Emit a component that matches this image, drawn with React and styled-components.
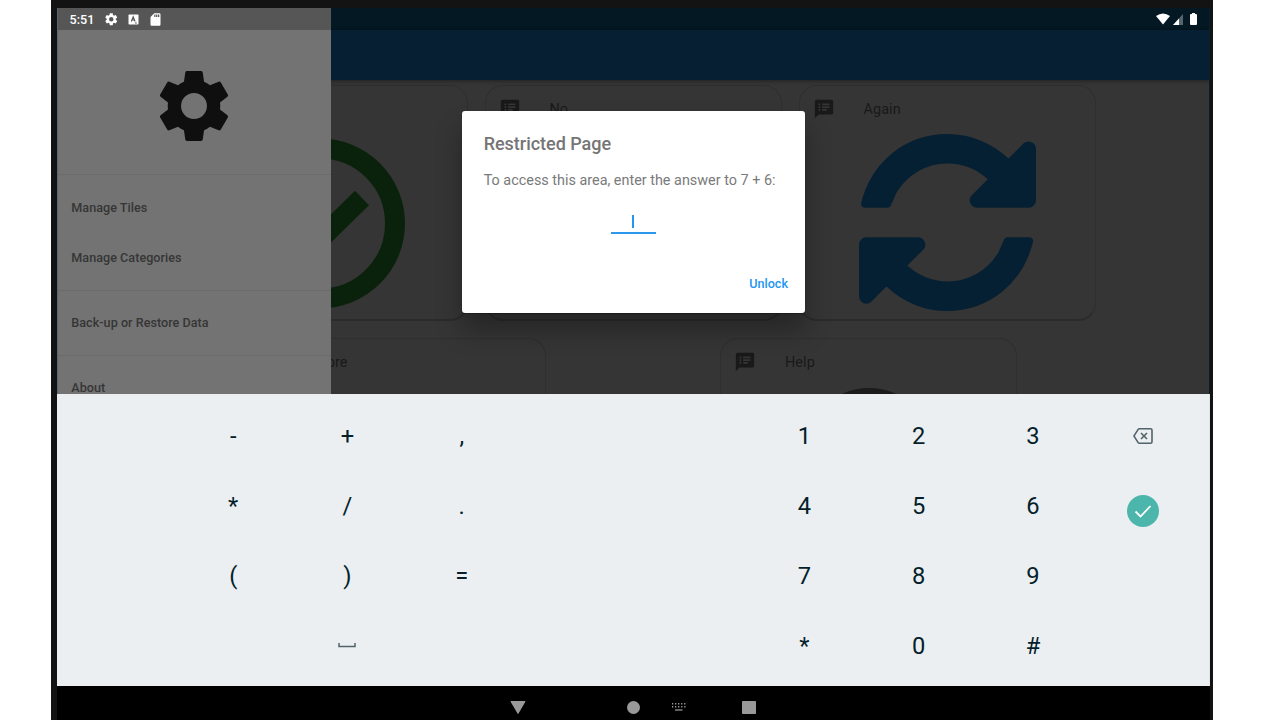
import React from "react";
import styled, { createGlobalStyle } from "styled-components";
import { MdSpeakerNotes, MdSdCard } from "react-icons/md";

const GlobalStyle = createGlobalStyle`
  * { box-sizing: border-box; }
  body { margin: 0; background: #fff; font-family: Roboto, "Liberation Sans", sans-serif; overflow: hidden; }
`;

const Device = styled.div`
  width: 1162px;
  height: 720px;
  margin-left: 51px;
  padding: 8px 3px 0 6px;
  background: #131313;
`;

const Screen = styled.div`
  display: flex;
  flex-direction: column;
  height: 712px;
  overflow: hidden;
`;

const AppArea = styled.div`
  position: relative;
  height: 386px;
  flex: none;
  overflow: hidden;
  background: #353535;
  border-right: 1px solid #04202d;
`;

const StatusBar = styled.div`
  height: 22px;
  background: #031822;
`;

const Toolbar = styled.div`
  position: relative;
  height: 50px;
  background: #071f33;
  box-shadow: 0 1px 4px rgba(0, 0, 0, 0.4);
`;

const TileRow = styled.div`
  display: flex;
  justify-content: center;
  gap: ${(p) => p.$gap}px;
  margin-top: ${(p) => p.$top}px;
`;

const Tile = styled.div`
  flex: none;
  width: 297px;
  height: 236px;
  border: 1px solid #2f2f2f;
  border-bottom: 2px solid #2b2b2b;
  border-radius: 18px;
`;

const TileHeader = styled.div`
  display: flex;
  align-items: center;
  gap: 29px;
  height: 22px;
  margin: 12px 0 0 13px;
  color: #191919;
  font-size: 14.4px;
  letter-spacing: 0.1px;
`;

const TileArt = styled.div`
  display: flex;
  justify-content: center;
  margin-top: ${(p) => p.$top}px;
`;

const Drawer = styled.div`
  position: absolute;
  top: 0;
  left: 0;
  width: 274px;
  height: 100%;
  background: #737373;
  border-left: 1px solid #526771;
`;

const DrawerStatus = styled.div`
  height: 22px;
  background: #565656;
`;

const DrawerHeader = styled.div`
  display: flex;
  align-items: center;
  justify-content: center;
  height: 145px;
  padding: 8px 2px 0 0;
  border-bottom: 1px solid #6b6b6b;
`;

const DrawerGroup = styled.div`
  padding: ${(p) => p.$top}px 0 ${(p) => p.$bottom}px;
  border-bottom: 1px solid #6b6b6b;
`;

const DrawerItem = styled.div`
  height: 50px;
  padding-left: 13.3px;
  line-height: 51px;
  font-size: 12.6px;
  font-weight: 500;
  letter-spacing: 0.03px;
  color: #363636;
`;

const StatusIcons = styled.div`
  position: absolute;
  top: 0;
  left: 0;
  display: flex;
  align-items: center;
  width: 100%;
  height: 22px;
  padding: 0 12px 0 12.5px;
  color: #fff;
`;

const Clock = styled.span`
  width: 34.5px;
  font-size: 12.6px;
  font-weight: 500;
  letter-spacing: 0.05px;
`;

const StatusGlyph = styled.span`
  display: flex;
  width: ${(p) => p.$width}px;
  margin-left: ${(p) => p.$push || "0"};
`;

const Dialog = styled.div`
  position: absolute;
  top: 103px;
  left: 405px;
  display: flex;
  flex-direction: column;
  width: 343px;
  height: 202px;
  padding: 21px 17px 0 21.7px;
  border-radius: 3px;
  background: #fff;
  box-shadow: 0 17px 27px rgba(0, 0, 0, 0.3), 0 1px 1px rgba(0, 0, 0, 0.3);
`;

const DialogTitle = styled.div`
  height: 22px;
  line-height: 23px;
  font-size: 18px;
  font-weight: 500;
  letter-spacing: -0.03px;
  color: #757575;
`;

const DialogText = styled.div`
  height: 20px;
  margin-top: 17px;
  line-height: 20px;
  font-size: 14.4px;
  white-space: nowrap;
  color: #7a7a7a;
`;

const AnswerField = styled.div`
  display: flex;
  justify-content: center;
  width: 45px;
  height: 21px;
  margin: 22px 0 0 127.3px;
  padding-right: 1px;
  border-bottom: 2px solid #2b98ee;
`;

const Caret = styled.div`
  width: 2px;
  height: 13px;
  margin-top: 2px;
  background: #2196f3;
`;

const UnlockButton = styled.button`
  align-self: flex-end;
  height: 20px;
  margin-top: 40px;
  padding: 0;
  border: 0;
  background: none;
  font: 500 12.6px/20px Roboto, sans-serif;
  letter-spacing: 0;
  color: #2196f3;
`;

const Keyboard = styled.div`
  display: grid;
  flex: none;
  grid-template-columns: repeat(8, 114.25px) 105px;
  grid-auto-rows: 70px;
  height: 292px;
  padding: 7px 0 0 119.1px;
  background: #ebeff2;
  border-right: 1px solid #dfe6ea;
`;

const Key = styled.div`
  display: flex;
  align-items: center;
  justify-content: center;
  padding-top: ${(p) => p.$drop || 0}px;
  font-size: 23.7px;
  color: #061f2b;
`;

const EnterKey = styled.div`
  display: flex;
  align-items: center;
  justify-content: center;
  width: 32px;
  height: 32px;
  margin-left: 1px;
  border-radius: 50%;
  background: #4db6ac;
`;

const NavBar = styled.div`
  display: flex;
  align-items: center;
  flex: 1;
  padding: 8px 0 0 453px;
  background: #000;
`;

const NavItem = styled.span`
  display: flex;
  width: ${(p) => p.$width}px;
`;

const Gear = ({ size, color }) => (
  <svg width={size} height={size} viewBox="0 0 24 24" fill={color}>
    <path d="M19.43 12.98c.04-.32.07-.64.07-.98s-.03-.66-.07-.98l2.11-1.65c.19-.15.24-.42.12-.64l-2-3.46c-.12-.22-.39-.3-.61-.22l-2.49 1c-.52-.4-1.08-.73-1.69-.98l-.38-2.65C14.46 2.18 14.25 2 14 2h-4c-.25 0-.46.18-.49.42l-.38 2.65c-.61.25-1.17.59-1.69.98l-2.49-1c-.23-.09-.49 0-.61.22l-2 3.46c-.13.22-.07.49.12.64l2.11 1.65c-.04.32-.07.65-.07.98s.03.66.07.98l-2.11 1.65c-.19.15-.24.42-.12.64l2 3.46c.12.22.39.3.61.22l2.49-1c.52.4 1.08.73 1.69.98l.38 2.65c.03.24.24.42.49.42h4c.25 0 .46-.18.49-.42l.38-2.65c.61-.25 1.17-.59 1.69-.98l2.49 1c.23.09.49 0 .61-.22l2-3.46c.12-.22.07-.49-.12-.64l-2.11-1.65zM12 15.7a3.7 3.7 0 1 1 0-7.4 3.7 3.7 0 0 1 0 7.4z" />
  </svg>
);

const CheckArt = () => (
  <svg width="171" height="171" viewBox="0 0 171 171" fill="none" stroke="#0a220b" strokeWidth="20">
    <circle cx="86" cy="85.5" r="75" />
    <path d="M41 86L71 116L128 60" />
  </svg>
);

const RefreshArt = () => (
  <svg width="177" height="177" viewBox="0 0 1536 1536" fill="#062033">
    <path d="M1511 928q0 5-1 7-64 268-268 434.500t-478 166.500q-146 0-282.500-55t-243.500-157l-129 129q-19 19-45 19t-45-19-19-45v-448q0-26 19-45t45-19h448q26 0 45 19t19 45-19 45l-137 137q71 66 161 102t187 36q134 0 250-65t186-179q11-17 53-117 8-23 30-23h192q13 0 22.500 9.500t9.500 22.500zm25-800v448q0 26-19 45t-45 19h-448q-26 0-45-19t-19-45 19-45l138-138q-148-137-349-137-134 0-250 65t-186 179q-11 17-53 117-8 23-30 23h-199q-13 0-22.500-9.500t-9.500-22.500v-7q65-268 270-434.500t480-166.500q146 0 284 55.500t245 156.500l130-129q19-19 45-19t45 19 19 45z" />
  </svg>
);

const HelpArt = () => (
  <svg width="130" height="130" viewBox="0 0 130 130">
    <circle cx="65" cy="65" r="65" fill="#1b1b1b" />
  </svg>
);

const TileCard = ({ label, top, children }) => (
  <Tile>
    <TileHeader>
      <MdSpeakerNotes size={22} />
      {label}
    </TileHeader>
    <TileArt $top={top}>{children}</TileArt>
  </Tile>
);

const SpaceIcon = () => (
  <svg width="18" height="6" viewBox="0 0 18 6" fill="none" stroke="#53636c" strokeWidth="1.5">
    <path d="M1 0V3.500H17V0" />
  </svg>
);

const BackspaceIcon = () => (
  <svg width="20" height="16" viewBox="0 0 20 16" fill="none" stroke="#53636c" strokeWidth="1.600">
    <path d="M6.500 0.800H17.500Q19 0.800 19 2.300V13.700Q19 15.200 17.500 15.200H6.500Q5.600 15.200 5 14.400L0.900 8L5 1.600Q5.600 0.800 6.500 0.800Z" />
    <path d="M8 5L14 11M14 5L8 11" />
  </svg>
);

const keys = [
  "-", "+", ",", "", "", "1", "2", "3", "back",
  "*", "/", ".", "", "", "4", "5", "6", "enter",
  "(", ")", "=", "", "", "7", "8", "9", "",
  "", "space", "", "", "", "*", "0", "#", "",
];

const keyFace = {
  back: <BackspaceIcon />,
  space: <SpaceIcon />,
  enter: (
    <EnterKey>
      <svg width="18" height="14" viewBox="0 0 18 14" fill="none" stroke="#fff" strokeWidth="1.800">
        <path d="M1.500 7.500L6.500 12.500L16.500 2" />
      </svg>
    </EnterKey>
  ),
};

const keyDrop = { enter: 10 };

export default function App() {
  return (
    <Device>
      <GlobalStyle />
      <Screen>
        <AppArea>
          <StatusBar />
          <Toolbar />
          <TileRow $gap={17} $top={5}>
            <TileCard label="Yes" top={18}><CheckArt /></TileCard>
            <TileCard label="No" top={14} />
            <TileCard label="Again" top={14}><RefreshArt /></TileCard>
          </TileRow>
          <TileRow $gap={174} $top={17}>
            <TileCard label="More" top={14} />
            <TileCard label="Help" top={15}><HelpArt /></TileCard>
          </TileRow>
          <Drawer>
            <DrawerStatus />
            <DrawerHeader><Gear size={84} color="#0f0f0f" /></DrawerHeader>
            <DrawerGroup $top={7} $bottom={8}>
              <DrawerItem>Manage Tiles</DrawerItem>
              <DrawerItem>Manage Categories</DrawerItem>
            </DrawerGroup>
            <DrawerGroup $top={6} $bottom={8}>
              <DrawerItem>Back-up or Restore Data</DrawerItem>
            </DrawerGroup>
            <DrawerGroup $top={6} $bottom={8}>
              <DrawerItem>About</DrawerItem>
            </DrawerGroup>
          </Drawer>
          <StatusIcons>
            <Clock>5:51</Clock>
            <StatusGlyph $width={23.500}><Gear size={14.500} color="#fff" /></StatusGlyph>
            <StatusGlyph $width={20}>
              <svg width="11" height="11" viewBox="0 0 11 11">
                <rect x="0.500" y="0.500" width="10" height="10" rx="0.800" fill="#fff" />
                <path d="M3.300 7.500L5.200 2.800L7.100 7.500M4 6H6.400M7 9H8.800" fill="none" stroke="#565656" strokeWidth="1.100" />
              </svg>
            </StatusGlyph>
            <StatusGlyph $width={15}><MdSdCard size={15} /></StatusGlyph>
            <StatusGlyph $width={17} $push="auto">
              <svg width="14" height="12" viewBox="0 0 14 12" fill="#fff">
                <path d="M0 3Q7-2.200 14 3L7 11.500Z" />
              </svg>
            </StatusGlyph>
            <StatusGlyph $width={17}>
              <svg width="10" height="11" viewBox="0 0 10 11">
                <path d="M0 11L10 0V11Z" fill="#56656c" />
                <path d="M0 11L6 4.400V11Z" fill="#fff" />
              </svg>
            </StatusGlyph>
            <StatusGlyph $width={7}>
              <svg width="7" height="12" viewBox="0 0 7 12" fill="#fff">
                <path d="M2 0H5V1H6Q7 1 7 2V11Q7 12 6 12H1Q0 12 0 11V2Q0 1 1 1H2Z" />
              </svg>
            </StatusGlyph>
          </StatusIcons>
          <Dialog>
            <DialogTitle>Restricted Page</DialogTitle>
            <DialogText>To access this area, enter the answer to 7 + 6:</DialogText>
            <AnswerField><Caret /></AnswerField>
            <UnlockButton>Unlock</UnlockButton>
          </Dialog>
        </AppArea>
        <Keyboard>
          {keys.map((k, i) => (
            <Key key={i} $drop={keyDrop[k]}>{keyFace[k] || k}</Key>
          ))}
        </Keyboard>
        <NavBar>
          <NavItem $width={117}>
            <svg width="16" height="14" viewBox="0 0 16 14"><path d="M1 1.500H15L8 13.500Z" fill="#999" stroke="#999" /></svg>
          </NavItem>
          <NavItem $width={45}>
            <svg width="13" height="13" viewBox="0 0 13 13"><circle cx="6.500" cy="6.500" r="6.500" fill="#999" /></svg>
          </NavItem>
          <NavItem $width={70}>
            <svg width="14" height="8" viewBox="0 0 14 8" stroke="#a0a0a0">
              <path d="M0 0.700H14M0 3.700H14" strokeDasharray="1.200 1.850" strokeWidth="1.400" />
              <path d="M3 7H10.500" strokeWidth="1.200" />
            </svg>
          </NavItem>
          <NavItem $width={14}>
            <svg width="14" height="13" viewBox="0 0 14 13"><rect width="14" height="13" rx="0.800" fill="#999" /></svg>
          </NavItem>
        </NavBar>
      </Screen>
    </Device>
  );
}
